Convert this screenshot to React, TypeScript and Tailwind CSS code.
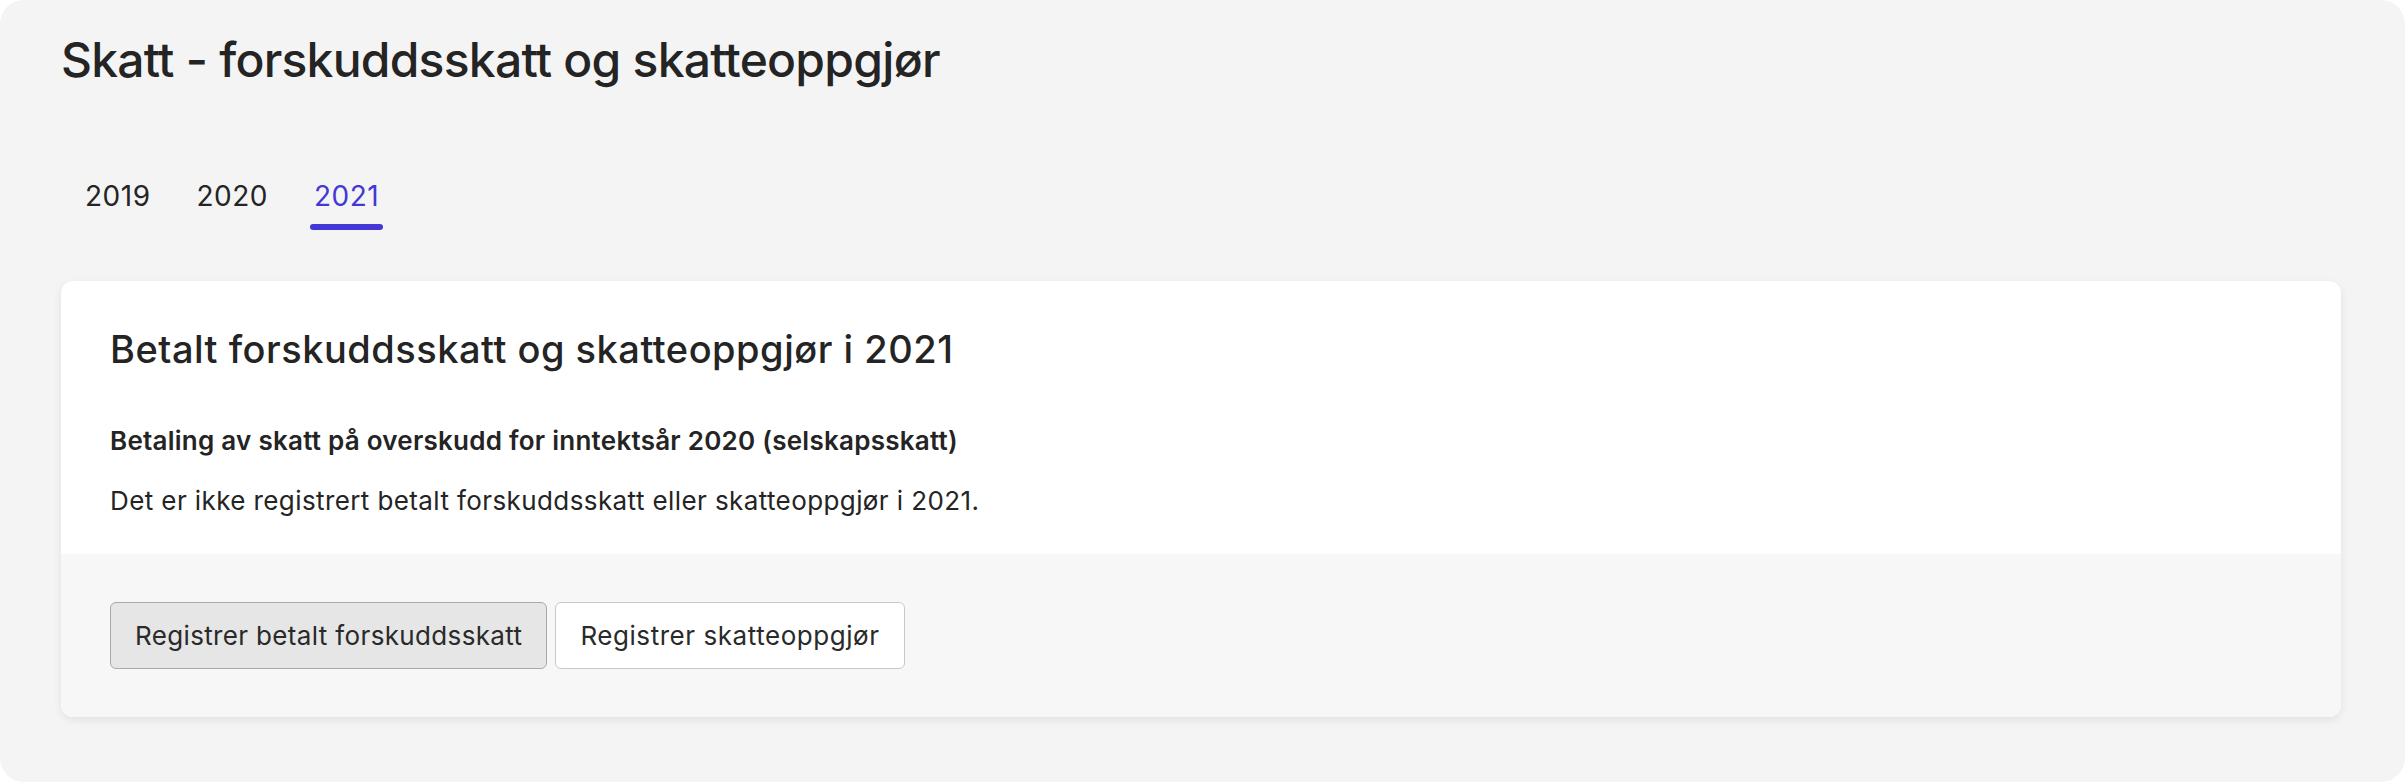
import { useState } from "react";

const years = ["2019", "2020", "2021"];

const App = () => {
  const [active, setActive] = useState("2021");

  return (
    <div className="min-h-screen bg-white font-['Inter',sans-serif] text-[#242424]">
      <div className="min-h-screen bg-[#f4f4f4] rounded-[24px] pl-[61px] pr-[64px] pt-[31px] pb-[64px]">
        {/* Title */}
        <h1 className="text-[48px] leading-[58px] font-medium tracking-[-0.75px]">
          Skatt - forskuddsskatt og skatteoppgjør
        </h1>

        {/* Year tabs */}
        <div className="flex mt-[87px] pl-[1px]">
          {years.map((year) => (
            <button
              key={year}
              onClick={() => setActive(year)}
              className="px-[19px] flex flex-col items-stretch"
            >
              <span
                className={`px-[4px] text-[28px] leading-[40px] tracking-[0.5px] ${
                  active === year ? "text-[#4338d6]" : "text-[#242424]"
                }`}
              >
                {year}
              </span>
              <span
                className={`mt-[8px] h-[6px] rounded-full ${
                  active === year ? "bg-[#4338d6]" : "bg-transparent"
                }`}
              />
            </button>
          ))}
        </div>

        {/* Card */}
        <div className="mt-[51px] bg-white rounded-[12px] shadow-[0_3px_8px_rgba(0,0,0,0.08)] overflow-hidden">
          <div className="px-[49px] pt-[46px] pb-[35px]">
            <h2 className="text-[38px] leading-[45px] font-medium tracking-[0.5px]">
              Betalt forskuddsskatt og skatteoppgjør i {active}
            </h2>
            <p className="mt-[51px] text-[26px] leading-[36px] font-semibold tracking-[0.25px]">
              Betaling av skatt på overskudd for inntektsår 2020 (selskapsskatt)
            </p>
            <p className="mt-[24px] text-[26px] leading-[36px] tracking-[0.4px]">
              Det er ikke registrert betalt forskuddsskatt eller skatteoppgjør i {active}.
            </p>
          </div>
          <div className="bg-[#f7f7f7] px-[49px] py-[48px] flex gap-[8px]">
            <button className="h-[67px] px-[24px] rounded-[6px] border-[1.5px] border-[#a9a9a9] bg-[#e6e6e6] text-[26px] tracking-[0.35px] text-[#2a2a2a]">
              Registrer betalt forskuddsskatt
            </button>
            <button className="h-[67px] px-[24px] rounded-[6px] border-[1.5px] border-[#c9c9c9] bg-white text-[26px] tracking-[0.55px] text-[#2a2a2a]">
              Registrer skatteoppgjør
            </button>
          </div>
        </div>
      </div>
    </div>
  );
};

export default App;
